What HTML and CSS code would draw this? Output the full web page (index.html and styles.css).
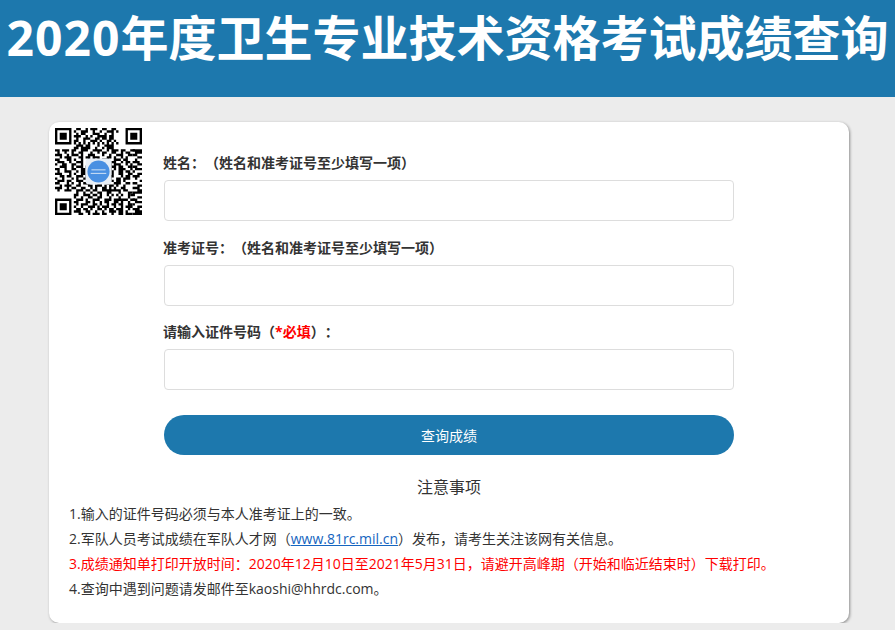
FILE: index.html
```html
<!DOCTYPE html>
<html lang="zh-CN">
<head>
<meta charset="utf-8">
<title>2020年度卫生专业技术资格考试成绩查询</title>
<link rel="stylesheet" href="styles.css">
</head>
<body>
<header class="banner"><h1 class="banner-title"><span class="banner-year">2020</span>年度卫生专业技术资格考试成绩查询</h1></header>
<main class="card">
  <div class="top">
    <svg class="qr" viewBox="0 0 37 37" aria-label="二维码">
      <path class="qr-mod" d="M9 .5h2m2 0h1m1 0h3m2 0h2m2 0h2M8 1.5h1m2 0h3m2 0h1m2 0h1m2 0h3m1 0h1M9 2.5h1m1 0h2m3 0h3m2 0h1m2 0h1M8 3.5h3m2 0h1m1 0h1m2 0h4m1 0h2M9 4.5h1m2 0h3m2 0h2m1 0h2m1 0h2M8 5.5h2m2 0h1m2 0h3m1 0h1m2 0h2m1 0h1M8 6.5h1m1 0h1m1 0h1m1 0h1m1 0h1m1 0h1m1 0h1m1 0h1m1 0h1m1 0h1M9 7.5h3m1 0h2m3 0h1m2 0h4M8 8.5h2m1 0h4m2 0h1m2 0h1m1 0h3M0 9.5h2m1 0h3m1 0h2m2 0h3m2 0h4m2 0h1m1 0h3m1 0h2m2 0h2M1 10.5h1m2 0h1m2 0h1m2 0h2m3 0h1m2 0h1m1 0h2m2 0h2m2 0h1m1 0h2M0 11.5h3m2 0h1m1 0h3m1 0h1m2 0h3m3 0h1m2 0h1m2 0h3m2 0h2M2 12.5h1m1 0h3m3 0h2m1 0h2m1 0h3m3 0h2m1 0h1m2 0h1m1 0h1M0 13.5h2m3 0h2m1 0h1m2 0h1m2 0h1m1 0h1m1 0h1m1 0h3m2 0h3m1 0h2M1 14.5h3m2 0h1m2 0h3m3 0h8m1 0h2m2 0h1m1 0h2M0 15.5h1m2 0h2m2 0h2m2 0h1m2 0h1m8 0h1m1 0h3m2 0h1m1 0h1M2 16.5h3m2 0h1m1 0h3m1 0h1m8 0h1m1 0h2m1 0h2m2 0h2M0 17.5h2m2 0h1m2 0h2m2 0h2m9 0h2m1 0h1m1 0h3m2 0h1M1 18.5h1m2 0h3m2 0h1m1 0h2m9 0h1m1 0h1m2 0h2m1 0h2M0 19.5h3m3 0h1m1 0h1m2 0h2m1 0h8m2 0h1m2 0h2m2 0h2M2 20.5h2m1 0h2m2 0h3m1 0h2m2 0h1m1 0h2m1 0h3m3 0h1m1 0h2M0 21.5h1m2 0h1m3 0h1m1 0h1m2 0h2m1 0h2m3 0h1m2 0h1m2 0h2m1 0h3M1 22.5h3m1 0h2m2 0h3m3 0h3m1 0h1m1 0h2m1 0h1m1 0h2m1 0h1M0 23.5h2m3 0h1m1 0h1m2 0h1m1 0h3m3 0h2m2 0h1m2 0h3m2 0h2M2 24.5h1m1 0h3m2 0h2m3 0h2m1 0h3m1 0h1m1 0h2m1 0h1m2 0h1M0 25.5h3m2 0h1m1 0h2m2 0h2m2 0h1m1 0h1m2 0h2m1 0h1m1 0h1m2 0h2M1 26.5h1m2 0h3m2 0h3m1 0h2m1 0h2m2 0h8m1 0h2M9 27.5h1m2 0h1m2 0h1m2 0h2m2 0h2m3 0h1m3 0h2M8 28.5h2m2 0h3m1 0h2m1 0h1m2 0h1m1 0h1m1 0h1m1 0h1m2 0h1M8 29.5h1m2 0h1m2 0h2m2 0h2m3 0h1m3 0h1m3 0h1M9 30.5h3m1 0h1m2 0h3m2 0h3m1 0h6m1 0h2M8 31.5h2m3 0h2m1 0h1m2 0h1m1 0h2m2 0h2m1 0h1m2 0h1M9 32.5h1m1 0h3m2 0h2m1 0h1m2 0h1m1 0h2m1 0h2m2 0h2M8 33.5h1m2 0h1m2 0h3m1 0h1m1 0h3m2 0h1m2 0h1m1 0h3M9 34.5h2m1 0h2m1 0h1m2 0h2m1 0h1m1 0h2m1 0h3m2 0h1M8 35.5h3m2 0h2m2 0h1m2 0h1m2 0h3m1 0h2m1 0h1M10 36.5h2m2 0h1m1 0h3m1 0h2m2 0h1m2 0h2m1 0h3"/>
      <path class="qr-mod" d="M33 9.500h4M34 10.500h3M33 11.500h2M35 12.500h2M34 13.500h1M33 14.500h3M35 15.500h2M33 16.500h2M34 17.500h3M33 18.500h1M35 19.500h2M33 20.500h3M34 21.500h1M36 22.500h1M33 23.500h2M35 24.500h2M33 25.500h3M35 26.500h2M33 27.500h4M32 28.500h2M35 29.500h2M33 30.500h2M34 31.500h3M33 32.500h1M35 33.500h2M33 34.500h3M34 35.500h3M33 36.500h4"/>
      <path class="qr-eye" d="M.5.5h6v6h-6zM30.500.5h6v6h-6zM.5 30.500h6v6h-6z"/>
      <path class="qr-dot" d="M2 2h3v3H2zM32 2h3v3h-3zM2 32h3v3H2z"/>
      <rect class="qr-logo-bg" x="13" y="13" width="11" height="11" rx="1.500"/>
      <circle class="qr-logo" cx="18.500" cy="18.500" r="4.700"/>
      <path class="qr-logo-line" d="M15.500 17.800h6M15.200 19.300h6.600"/>
    </svg>
    <form class="form">
      <div class="field">
        <label class="label" for="name">姓名：（姓名和准考证号至少填写一项）</label>
        <input class="input" id="name" type="text">
      </div>
      <div class="field">
        <label class="label" for="ticket">准考证号：（姓名和准考证号至少填写一项）</label>
        <input class="input" id="ticket" type="text">
      </div>
      <div class="field">
        <label class="label" for="idcard">请输入证件号码（<span class="required">*必填</span>）：</label>
        <input class="input" id="idcard" type="text">
      </div>
      <button class="submit" type="button">查询成绩</button>
    </form>
  </div>
  <section class="notes">
    <h2 class="notes-title">注意事项</h2>
    <p class="note">1.输入的证件号码必须与本人准考证上的一致。</p>
    <p class="note">2.军队人员考试成绩在军队人才网（<a class="note-link" href="#">www.81rc.mil.cn</a>）发布，请考生关注该网有关信息。</p>
    <p class="note note-red">3.成绩通知单打印开放时间：2020年12月10日至2021年5月31日，请避开高峰期（开始和临近结束时）下载打印。</p>
    <p class="note">4.查询中遇到问题请发邮件至kaoshi@hhrdc.com。</p>
  </section>
</main>
</body>
</html>
```

FILE: styles.css
```css
* { box-sizing: border-box; }
html, body { margin: 0; padding: 0; }
body {
  background: #ececec;
  color: #333;
  font-family: "Open Sans", "Noto Sans CJK SC", sans-serif;
  text-spacing-trim: space-all;
  overflow: hidden;
}
.banner {
  height: 97px;
  background: #1d78ad;
  display: flex;
  justify-content: center;
}
.banner-title {
  margin: 0;
  color: #fff;
  font-size: 48px;
  line-height: 76px;
  font-weight: 700;
  white-space: nowrap;
}
.banner-year { letter-spacing: 1px; }
.card {
  width: 800px;
  height: 501px;
  margin: 25px 0 0 49px;
  padding: 6px 0 0;
  background: #fff;
  border-radius: 10px;
  box-shadow: 1px 1px 3px rgba(0, 0, 0, .4);
}
.top { display: flex; align-items: flex-start; }
.qr {
  width: 87px;
  height: 87px;
  margin-left: 6px;
  flex: none;
  filter: blur(.35px);
}
.qr-mod { fill: none; stroke: #000; stroke-width: 1; }
.qr-eye { fill: none; stroke: #000; stroke-width: 1; }
.qr-dot { fill: #000; }
.qr-logo-bg { fill: #e8eef5; }
.qr-logo { fill: #4a90e2; }
.qr-logo-line { fill: none; stroke: #dbe9f8; stroke-width: .4; }
.form {
  width: 571px;
  margin-left: 21px;
  padding-top: 25px;
}
.field { margin-bottom: 16.5px; }
.field:nth-of-type(3) { margin-bottom: 25px; }
.label {
  display: block;
  height: 20px;
  line-height: 20px;
  margin-bottom: 7px;
  font-size: 14px;
  font-weight: 700;
  white-space: nowrap;
}
.required { color: #f00; }
.input {
  display: block;
  width: 570px;
  height: 41px;
  margin-left: 1px;
  border: 1px solid #ddd;
  border-radius: 4px;
  background: #fff;
  outline: none;
}
.submit {
  display: block;
  width: 570px;
  height: 40px;
  margin-left: 1px;
  border: 0;
  border-radius: 20px;
  background: #1d78ad;
  color: #fff;
  font: 14px "Open Sans", "Noto Sans CJK SC", sans-serif;
}
.notes { padding: 20px 20px 0; }
.notes-title {
  margin: 0 0 1px;
  font-size: 16px;
  font-weight: 400;
  line-height: 25px;
  text-align: center;
  color: #333;
}
.note {
  margin: 0;
  font-size: 14px;
  line-height: 25px;
  white-space: nowrap;
}
.note-red { color: #f00; }
.note-link { color: #1565c0; }
```
